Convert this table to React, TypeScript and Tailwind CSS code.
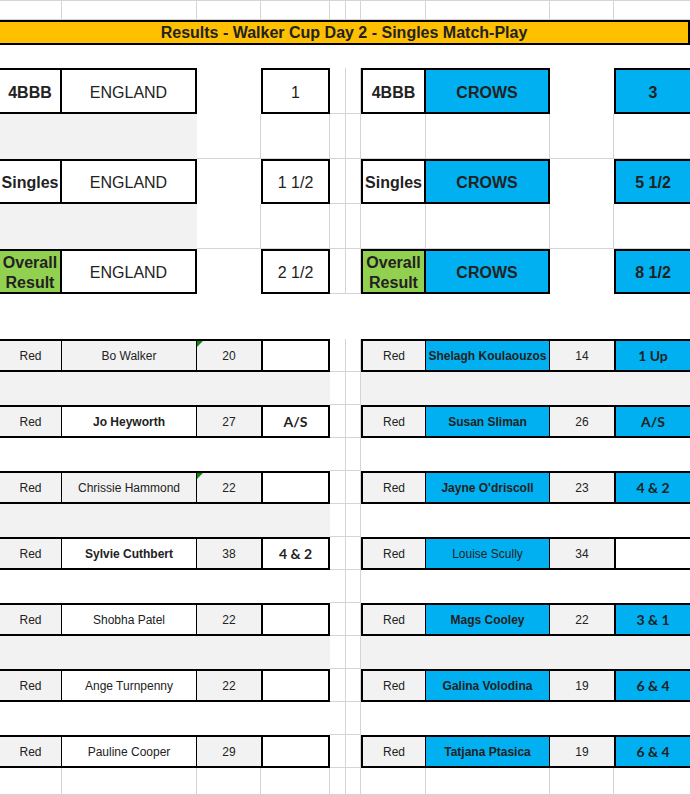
import React from 'react';

interface Player {
  name: string;
  hc: number;
  res: string;
  bold: boolean;
  grey?: boolean;
  flag?: boolean;
}

const left: Player[] = [
  { name: 'Bo Walker', hc: 20, res: '', bold: false, grey: true, flag: true },
  { name: 'Jo Heyworth', hc: 27, res: 'A/S', bold: true },
  { name: 'Chrissie Hammond', hc: 22, res: '', bold: false, grey: true, flag: true },
  { name: 'Sylvie Cuthbert', hc: 38, res: '4 & 2', bold: true },
  { name: 'Shobha Patel', hc: 22, res: '', bold: false },
  { name: 'Ange Turnpenny', hc: 22, res: '', bold: false },
  { name: 'Pauline Cooper', hc: 29, res: '', bold: false },
];

const right: Player[] = [
  { name: 'Shelagh Koulaouzos', hc: 14, res: '1 Up', bold: true },
  { name: 'Susan Sliman', hc: 26, res: 'A/S', bold: true },
  { name: "Jayne O'driscoll", hc: 23, res: '4 & 2', bold: true },
  { name: 'Louise Scully', hc: 34, res: '', bold: false },
  { name: 'Mags Cooley', hc: 22, res: '3 & 1', bold: true },
  { name: 'Galina Volodina', hc: 19, res: '6 & 4', bold: true },
  { name: 'Tatjana Ptasica', hc: 19, res: '6 & 4', bold: true },
];

// gap rows under each pair: [left grey, right grey]
const gaps: [boolean, boolean][] = [
  [true, true],
  [false, false],
  [true, false],
  [false, false],
  [true, true],
  [false, false],
];

const GR = 'border-r border-r-[#d4d4d4] border-b border-b-[#d4d4d4]';
const GJ = 'border-b border-b-[#d4d4d4]';
const BOX = 'border-t-2 border-t-black border-b-2 border-b-black';

const Cell: React.FC<{ c?: string; children?: React.ReactNode }> = ({ c = '', children }) => (
  <div className={`relative flex items-center justify-center text-center whitespace-nowrap overflow-hidden ${c}`}>
    {children}
  </div>
);

const GridCells: React.FC<{ n: number; last?: boolean; extra?: string }> = ({ n, last = false, extra = '' }) => (
  <>
    {Array.from({ length: n }).map((_, i) => (
      <Cell key={i} c={`${last && i == n - 1 ? GJ : GR} ${extra}`} />
    ))}
  </>
);

const SummaryRow: React.FC<{
  label: React.ReactNode;
  labelBg: string;
  eng: string;
  crows: string;
}> = ({ label, labelBg, eng, crows }) => (
  <>
    <Cell c={`${BOX} border-r-2 border-r-black font-bold text-[16px] leading-5 pt-[3px] ${labelBg}`}>{label}</Cell>
    <Cell c={`${BOX} border-r-2 border-r-black text-[16px] pt-[3px]`}>ENGLAND</Cell>
    <Cell />
    <Cell c={`${BOX} border-l-2 border-l-black border-r-2 border-r-black text-[16px] pt-[3px]`}>{eng}</Cell>
    <Cell c={GR} />
    <Cell c={GR} />
    <Cell c={`${BOX} border-l-2 border-l-black border-r-2 border-r-black font-bold text-[16px] leading-5 pt-[3px] ${labelBg}`}>
      {label}
    </Cell>
    <Cell c={`${BOX} border-r-2 border-r-black bg-[#00b0f0] font-bold text-[16px] pt-[3px]`}>CROWS</Cell>
    <Cell />
    <Cell c={`${BOX} border-l-2 border-l-black bg-[#00b0f0] font-bold text-[16px] pt-[3px]`}>{crows}</Cell>
  </>
);

const SpacerRow: React.FC = () => (
  <>
    <div className="col-span-2 bg-[#f2f2f2]" />
    <GridCells n={8} last />
  </>
);

const Flag: React.FC = () => (
  <span className="absolute left-0 top-0 w-0 h-0 border-t-[6px] border-t-[#0a8a0a] border-r-[6px] border-r-transparent" />
);

const PlayerRow: React.FC<{ l: Player; r: Player }> = ({ l, r }) => (
  <>
    <Cell c={`${BOX} border-r border-r-black bg-[#f2f2f2] text-[12px]`}>Red</Cell>
    <Cell c={`${BOX} border-r border-r-black text-[12px] ${l.grey ? 'bg-[#f2f2f2]' : 'bg-white'} ${l.bold ? 'font-bold' : ''}`}>
      {l.name}
    </Cell>
    <Cell c={`${BOX} bg-[#f2f2f2] text-[12px]`}>
      {l.flag && <Flag />}
      {l.hc}
    </Cell>
    <Cell c={`${BOX} border-l-2 border-l-black border-r-2 border-r-black bg-white font-['Lato',sans-serif] font-bold text-[14px]`}>
      {l.res}
    </Cell>
    <Cell c={GR} />
    <Cell c={GR} />
    <Cell c={`${BOX} border-l-2 border-l-black border-r border-r-black bg-[#f2f2f2] text-[12px]`}>Red</Cell>
    <Cell c={`${BOX} border-r border-r-black bg-[#00b0f0] text-[12px] ${r.bold ? 'font-bold' : ''}`}>{r.name}</Cell>
    <Cell c={`${BOX} bg-[#f2f2f2] text-[12px]`}>{r.hc}</Cell>
    <Cell c={`${BOX} border-l-2 border-l-black font-['Lato',sans-serif] font-bold text-[14px] ${r.res ? 'bg-[#00b0f0]' : 'bg-white'}`}>
      {r.res}
    </Cell>
  </>
);

const GapRow: React.FC<{ lg: boolean; rg: boolean }> = ({ lg, rg }) => (
  <>
    <div className={`col-span-4 ${lg ? 'bg-[#f2f2f2]' : 'bg-white'}`} />
    <Cell c={GR} />
    <Cell c={GR} />
    <div className={`col-span-4 ${rg ? 'bg-[#f2f2f2]' : 'bg-white'}`} />
  </>
);

const App: React.FC = () => {
  return (
    <div className="w-[690px] h-[795px] overflow-hidden bg-white font-['Liberation_Sans',Arial,sans-serif] text-[#222]">
      <div className="grid grid-cols-[62px_135px_64px_69px_16px_15px_65px_124px_64px_76px] grid-rows-[20px_25px_23px_46px_45px_45px_45px_45px_45px_repeat(13,33px)_27px]">
        {/* top row of plain cells */}
        <GridCells n={10} last extra="border-t border-t-[#d4d4d4]" />

        <div className="col-span-10 flex items-center justify-center bg-[#ffc000] border-t-2 border-t-black border-b-2 border-b-black border-r-2 border-r-black font-bold text-[16px]">
          Results - Walker Cup Day 2 - Singles Match-Play
        </div>

        <div className="col-span-10" />

        <SummaryRow label="4BBB" labelBg="bg-white" eng="1" crows="3" />
        <SpacerRow />
        <SummaryRow label="Singles" labelBg="bg-white" eng="1 1/2" crows="5 1/2" />
        <SpacerRow />
        <SummaryRow
          label={
            <span>
              Overall
              <br />
              Result
            </span>
          }
          labelBg="bg-[#92d050]"
          eng="2 1/2"
          crows="8 1/2"
        />

        <div className="col-span-10" />

        {left.map((l, i) => (
          <React.Fragment key={l.name}>
            <PlayerRow l={l} r={right[i]} />
            {i < gaps.length && <GapRow lg={gaps[i][0]} rg={gaps[i][1]} />}
          </React.Fragment>
        ))}

        <GridCells n={10} last />
      </div>
    </div>
  );
};

export default App;
